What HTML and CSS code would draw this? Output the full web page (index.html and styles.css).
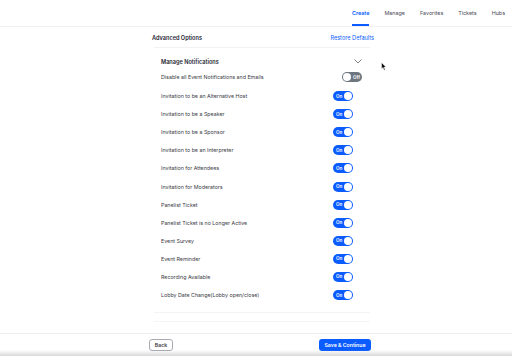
FILE: index.html
```html
<!DOCTYPE html>
<html>
<head>
<meta charset="utf-8">
<link rel="stylesheet" href="styles.css">
</head>
<body>
<header class="topbar">
  <nav class="tabs">
    <span class="tab active">Create</span>
    <span class="tab">Manage</span>
    <span class="tab">Favorites</span>
    <span class="tab">Tickets</span>
    <span class="tab">Hubs</span>
  </nav>
</header>
<main class="content">
  <div class="adv">
    <span class="adv-title">Advanced Options</span>
    <span class="restore">Restore Defaults</span>
  </div>
  <section class="card">
    <div class="card-head">
      <span class="card-title">Manage Notifications</span>
      <svg class="chev" width="8" height="5" viewBox="0 0 8 5"><path d="M0.5 0.5 L4 4 L7.5 0.5" fill="none" stroke="#666" stroke-width="0.8"/></svg>
    </div>
    <div class="row off-row"><span>Disable all Event Notifications and Emails</span><span class="toggle off"><i></i>Off</span></div>
    <div class="row"><span>Invitation to be an Alternative Host</span><span class="toggle on">On<i></i></span></div>
    <div class="row"><span>Invitation to be a Speaker</span><span class="toggle on">On<i></i></span></div>
    <div class="row"><span>Invitation to be a Sponsor</span><span class="toggle on">On<i></i></span></div>
    <div class="row"><span>Invitation to be an Interpreter</span><span class="toggle on">On<i></i></span></div>
    <div class="row"><span>Invitation for Attendees</span><span class="toggle on">On<i></i></span></div>
    <div class="row"><span>Invitation for Moderators</span><span class="toggle on">On<i></i></span></div>
    <div class="row"><span>Panelist Ticket</span><span class="toggle on">On<i></i></span></div>
    <div class="row"><span>Panelist Ticket is no Longer Active</span><span class="toggle on">On<i></i></span></div>
    <div class="row"><span>Event Survey</span><span class="toggle on">On<i></i></span></div>
    <div class="row"><span>Event Reminder</span><span class="toggle on">On<i></i></span></div>
    <div class="row"><span>Recording Available</span><span class="toggle on">On<i></i></span></div>
    <div class="row"><span>Lobby Date Change(Lobby open/close)</span><span class="toggle on">On<i></i></span></div>
  </section>
  <div class="card-end"></div>
</main>
<footer class="footer">
  <div class="footer-inner">
    <button class="btn back">Back</button>
    <button class="btn save">Save &amp; Continue</button>
  </div>
</footer>
<div class="shade"></div>
<svg class="cursor" width="6" height="9" viewBox="0 0 6 9"><path d="M0.5 0.5 L0.5 7 L2 5.6 L3.2 8.2 L4.2 7.7 L3 5.2 L5 5.1 Z" fill="#111" stroke="#fff" stroke-width="0.5"/></svg>
</body>
</html>
```
FILE: styles.css
```css
* { box-sizing: border-box; }
html, body { margin: 0; padding: 0; }
body {
  width: 512px;
  height: 356px;
  overflow: hidden;
  background: #fff;
  font-family: "Inter", "Liberation Sans", sans-serif;
  color: #232333;
  position: relative;
}
.topbar {
  height: 27px;
  border-bottom: 1px solid #f0f0f2;
  display: flex;
  justify-content: flex-end;
}
.tabs {
  display: flex;
  align-items: stretch;
  gap: 15px;
  padding-right: 7px;
}
.tab {
  font-size: 5.4px;
  color: #4a4a57;
  display: flex;
  align-items: center;
  padding-top: 1px;
  border-bottom: 2px solid transparent;
}
.tab.active {
  color: #0b5cff;
  font-weight: 600;
  border-bottom-color: #0b5cff;
}
.content {
  width: 224px;
  margin-left: 150px;
}
.adv {
  height: 20px;
  display: flex;
  justify-content: space-between;
  align-items: center;
  padding: 2px 0 0 2px;
  font-size: 5.6px;
}
.adv-title { font-weight: 600; color: #232333; }
.restore { color: #0b5cff; }
.card {
  margin: 0 4px 0 4px;
  border-top: 1px solid #f2f2f4;
  padding: 7px 0 0 7px;
}
.card-head {
  height: 13px;
  display: flex;
  justify-content: space-between;
  align-items: center;
  padding-right: 8px;
  font-size: 5.6px;
  font-weight: 600;
}
.row {
  height: 18.1px;
  display: flex;
  align-items: center;
  justify-content: space-between;
  padding-right: 17px;
  font-size: 5.3px;
  color: #3a3a45;
}
.row.off-row { padding-right: 8px; height: 19px; padding-bottom: 1px; }
.toggle {
  width: 20px;
  height: 10px;
  border-radius: 5px;
  display: flex;
  align-items: center;
  font-size: 4.6px;
  font-weight: 600;
  padding: 0 1px;
}
.toggle i {
  width: 8px;
  height: 8px;
  border-radius: 50%;
  background: #fff;
  display: block;
}
.toggle.on {
  background: #0b5cff;
  color: #fff;
  justify-content: space-between;
  padding-left: 3px;
}
.toggle.off {
  background: #6e7680;
  color: #fff;
  gap: 2px;
}
.card-end {
  margin: 8px 4px 0;
  height: 10px;
  border-top: 1px solid #f4f4f6;
  border-bottom: 1px solid #f4f4f6;
}
.footer {
  position: absolute;
  left: 0;
  right: 0;
  top: 333px;
  border-top: 1px solid #ededf0;
  height: 23px;
}
.footer-inner {
  width: 222px;
  margin-left: 149px;
  padding-top: 5px;
  display: flex;
  justify-content: space-between;
}
.btn {
  height: 12px;
  border-radius: 3px;
  font-family: "Inter", "Liberation Sans", sans-serif;
  font-size: 5.2px;
  font-weight: 600;
  padding: 0;
  cursor: default;
}
.back {
  width: 24px;
  background: #fff;
  border: 1px solid #a9a9b2;
  color: #3a3a45;
}
.save {
  width: 52px;
  background: #0b5cff;
  border: none;
  color: #fff;
}
.shade {
  position: absolute;
  left: 0;
  right: 0;
  bottom: 0;
  height: 6px;
  background: linear-gradient(to bottom, rgba(200,200,205,0), rgba(185,185,190,0.55));
}
.cursor {
  position: absolute;
  left: 381px;
  top: 62px;
}
```
